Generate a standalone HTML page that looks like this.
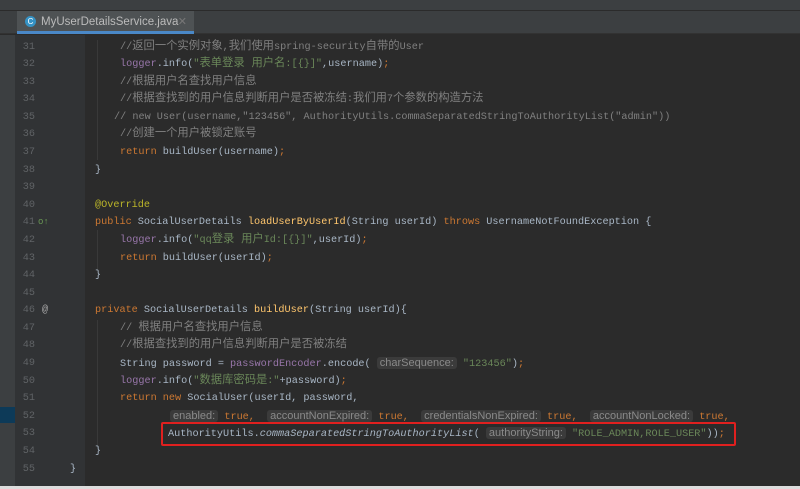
<!DOCTYPE html>
<html><head><meta charset="utf-8"><style>
*{margin:0;padding:0;box-sizing:border-box}
body{width:800px;height:489px;overflow:hidden;background:#2b2b2b;font-family:"Liberation Mono","Noto Sans CJK SC",monospace;font-size:10.2px;position:relative}
.top{position:absolute;left:0;top:0;width:800px;height:11px;background:#3c3f41;border-bottom:1px solid #2b2b2b}
.tabbar{position:absolute;left:0;top:11px;width:800px;height:23px;background:#3c3f41;border-bottom:1px solid #323232}
.tab{position:absolute;left:17px;top:0;width:177px;height:23px;background:#4e5254;border-bottom:3px solid #4a88c7;color:#bbb;font-family:"Liberation Sans",sans-serif;font-size:11.5px;line-height:22px;padding-left:24px;white-space:nowrap}
.tab .ic{position:absolute;left:8px;top:5px;width:11px;height:11px;border-radius:50%;background:#3592c4;color:#fff;font-size:8px;line-height:11px;text-align:center}
.tab .x{position:absolute;right:7px;top:0;color:#777;font-size:11px}
.lstrip{position:absolute;left:0;top:35px;width:15px;height:454px;background:#3c3f41}
.gutter{position:absolute;left:15px;top:35px;width:70px;height:454px;background:#313335}
.ln{position:absolute;left:15px;width:20px;text-align:right;color:#606366;height:17.6px;line-height:17.6px}
.code{position:absolute;left:0;height:17.6px;line-height:17.6px;color:#a9b7c6;white-space:pre}
.z{font-size:11.3px}
.c{color:#808080}.k{color:#cc7832}.s{color:#6a8759}.p{color:#9876aa}.f{color:#ffc66d}.a{color:#bbb529}.i{font-style:italic}
.h{background:#3b3b3b;color:#8a8a8a;border-radius:3px;padding:0 3px;font-family:"Liberation Sans",sans-serif;font-size:11px}
.box{position:absolute;left:161px;top:422px;width:575px;height:24px;border:2px solid #e0201f;border-radius:2px}
.guide{position:absolute;width:1px;background:#393939}
.bottom{position:absolute;left:0;top:486px;width:800px;height:3px;background:#ddd}
</style></head><body>
<div class="top"></div>
<div class="tabbar"><div class="tab"><span class="ic">C</span>MyUserDetailsService.java<span class="x">✕</span></div></div>
<div class="lstrip"></div>
<div style="position:absolute;left:0;top:407px;width:15px;height:16px;background:#0d3a58"></div>
<div class="gutter"></div>
<div class="guide" style="left:97px;top:40px;height:120px"></div>
<div class="guide" style="left:97px;top:230px;height:40px"></div>
<div class="guide" style="left:97px;top:320px;height:128px"></div>

<div class="ln" style="top:38.5px">31</div><div class="code" style="left:120px;top:38.5px"><span class="c">//<span class="z">返回一个实例对象</span>,<span class="z">我们使用</span>spring-security<span class="z">自带的</span>User</span></div>
<div class="ln" style="top:56.1px">32</div><div class="code" style="left:120px;top:56.1px"><span class="p">logger</span>.info(<span class="s">"<span class="z">表单登录 用户名</span>:[{}]"</span>,username)<span class="k">;</span></div>
<div class="ln" style="top:73.7px">33</div><div class="code" style="left:120px;top:73.7px"><span class="c">//<span class="z">根据用户名查找用户信息</span></span></div>
<div class="ln" style="top:91.2px">34</div><div class="code" style="left:120px;top:91.2px"><span class="c">//<span class="z">根据查找到的用户信息判断用户是否被冻结</span>:<span class="z">我们用</span>7<span class="z">个参数的构造方法</span></span></div>
<div class="ln" style="top:108.8px">35</div><div class="code" style="left:114px;top:108.8px"><span class="c">// new User(username,"123456", AuthorityUtils.commaSeparatedStringToAuthorityList("admin"))</span></div>
<div class="ln" style="top:126.4px">36</div><div class="code" style="left:120px;top:126.4px"><span class="c">//<span class="z">创建一个用户被锁定账号</span></span></div>
<div class="ln" style="top:144px">37</div><div class="code" style="left:120px;top:144px"><span class="k">return </span>buildUser(username)<span class="k">;</span></div>
<div class="ln" style="top:161.6px">38</div><div class="code" style="left:95px;top:161.6px">}</div>
<div class="ln" style="top:179.2px">39</div>
<div class="ln" style="top:196.8px">40</div><div class="code" style="left:95px;top:196.8px"><span class="a">@Override</span></div>
<div class="ln" style="top:214.3px">41</div><div class="code" style="left:38px;top:214.3px;color:#6a9955;font-size:9px">o↑</div><div class="code" style="left:95px;top:214.3px"><span class="k">public </span>SocialUserDetails <span class="f">loadUserByUserId</span>(String userId) <span class="k">throws </span>UsernameNotFoundException {</div>
<div class="ln" style="top:231.9px">42</div><div class="code" style="left:120px;top:231.9px"><span class="p">logger</span>.info(<span class="s">"qq<span class="z">登录 用户</span>Id:[{}]"</span>,userId)<span class="k">;</span></div>
<div class="ln" style="top:249.5px">43</div><div class="code" style="left:120px;top:249.5px"><span class="k">return </span>buildUser(userId)<span class="k">;</span></div>
<div class="ln" style="top:267.1px">44</div><div class="code" style="left:95px;top:267.1px">}</div>
<div class="ln" style="top:284.7px">45</div>
<div class="ln" style="top:302.3px">46</div><div class="code" style="left:42px;top:302.3px;color:#aaa">@</div><div class="code" style="left:95px;top:302.3px"><span class="k">private </span>SocialUserDetails <span class="f">buildUser</span>(String userId){</div>
<div class="ln" style="top:319.9px">47</div><div class="code" style="left:120px;top:319.9px"><span class="c">// <span class="z">根据用户名查找用户信息</span></span></div>
<div class="ln" style="top:337.4px">48</div><div class="code" style="left:120px;top:337.4px"><span class="c">//<span class="z">根据查找到的用户信息判断用户是否被冻结</span></span></div>
<div class="ln" style="top:355px">49</div><div class="code" style="left:120px;top:355px">String password = <span class="p">passwordEncoder</span>.encode( <span class="h">charSequence:</span> <span class="s">"123456"</span>)<span class="k">;</span></div>
<div class="ln" style="top:372.6px">50</div><div class="code" style="left:120px;top:372.6px"><span class="p">logger</span>.info(<span class="s">"<span class="z">数据库密码是</span>:"</span>+password)<span class="k">;</span></div>
<div class="ln" style="top:390.2px">51</div><div class="code" style="left:120px;top:390.2px"><span class="k">return new </span>SocialUser(userId, password,</div>
<div class="ln" style="top:407.8px">52</div><div class="code" style="left:170px;top:407.8px"><span class="h">enabled:</span> <span class="k">true,</span>  <span class="h">accountNonExpired:</span> <span class="k">true,</span>  <span class="h">credentialsNonExpired:</span> <span class="k">true,</span>  <span class="h">accountNonLocked:</span> <span class="k">true,</span></div>
<div class="ln" style="top:425.4px">53</div><div class="code" style="left:168px;top:425.4px">AuthorityUtils.<span class="i">commaSeparatedStringToAuthorityList</span>( <span class="h">authorityString:</span> <span class="s">"ROLE_ADMIN,ROLE_USER"</span>))<span class="k">;</span></div>
<div class="ln" style="top:443px">54</div><div class="code" style="left:95px;top:443px">}</div>
<div class="ln" style="top:460.6px">55</div><div class="code" style="left:70px;top:460.6px">}</div>
<div class="box"></div>
<div class="bottom"></div>
</body></html>
